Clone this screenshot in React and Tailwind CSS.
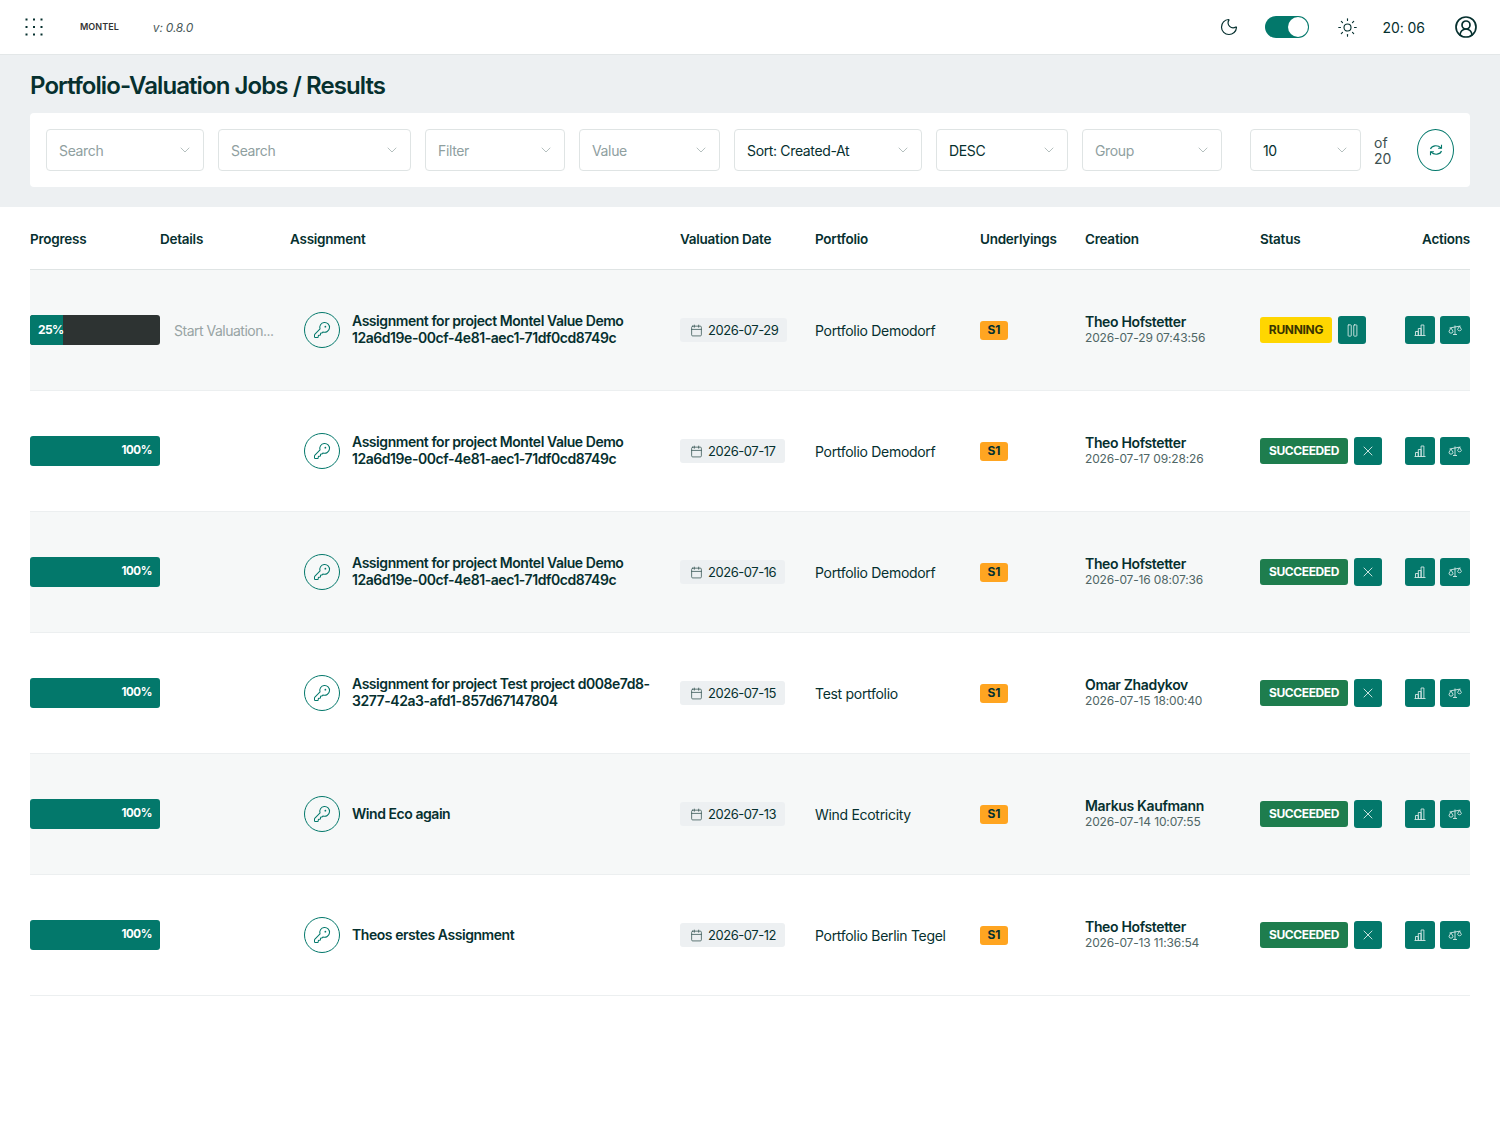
import React from 'react';
import { Moon, Sun, CircleUserRound, ChevronDown, KeyRound, Calendar, Pause, X } from 'lucide-react';

const rows = [
  { pct: 25, details: 'Start Valuation...', title: ['Assignment for project Montel Value Demo', '12a6d19e-00cf-4e81-aec1-71df0cd8749c'], date: '2026-07-29', portfolio: 'Portfolio Demodorf', user: 'Theo Hofstetter', created: '2026-07-29 07:43:56', status: 'RUNNING' },
  { pct: 100, title: ['Assignment for project Montel Value Demo', '12a6d19e-00cf-4e81-aec1-71df0cd8749c'], date: '2026-07-17', portfolio: 'Portfolio Demodorf', user: 'Theo Hofstetter', created: '2026-07-17 09:28:26', status: 'SUCCEEDED' },
  { pct: 100, title: ['Assignment for project Montel Value Demo', '12a6d19e-00cf-4e81-aec1-71df0cd8749c'], date: '2026-07-16', portfolio: 'Portfolio Demodorf', user: 'Theo Hofstetter', created: '2026-07-16 08:07:36', status: 'SUCCEEDED' },
  { pct: 100, title: ['Assignment for project Test project d008e7d8-', '3277-42a3-afd1-857d67147804'], date: '2026-07-15', portfolio: 'Test portfolio', user: 'Omar Zhadykov', created: '2026-07-15 18:00:40', status: 'SUCCEEDED' },
  { pct: 100, title: ['Wind Eco again'], date: '2026-07-13', portfolio: 'Wind Ecotricity', user: 'Markus Kaufmann', created: '2026-07-14 10:07:55', status: 'SUCCEEDED' },
  { pct: 100, title: ['Theos erstes Assignment'], date: '2026-07-12', portfolio: 'Portfolio Berlin Tegel', user: 'Theo Hofstetter', created: '2026-07-13 11:36:54', status: 'SUCCEEDED' },
];

const filters = [
  { label: 'Search', w: 'w-[158px]' },
  { label: 'Search', w: 'w-[193px]' },
  { label: 'Filter', w: 'w-[140px]' },
  { label: 'Value', w: 'w-[141px]' },
  { label: 'Sort: Created-At', w: 'w-[188px]', on: true },
  { label: 'DESC', w: 'w-[132px]', on: true },
  { label: 'Group', w: 'w-[140px]' },
];

const cols = 'grid grid-cols-[130px_130px_390px_135px_165px_105px_175px_145px_65px]';

const Dots = () => (
  <svg width="18" height="18" viewBox="0 0 18 18" fill="#06302f">
    {[1.5, 9, 16.5].map((y) => [1.5, 9, 16.5].map((x) => <rect key={`${x}-${y}`} x={x - 1} y={y - 1} width="2" height="2" />))}
  </svg>
);

const Bars = () => (
  <svg width="14" height="14" viewBox="0 0 14 14" fill="none" stroke="#d6e9e6" strokeWidth="0.9">
    <path d="M1.5 12.5h11M2.5 12.5V8.5h2.8V12.5M5.3 12.5V5.5h2.8v7M8.1 12.5V2h2.8v10.5" />
  </svg>
);

// tilted balance, lucide's Scale is level
const Balance = () => (
  <svg width="14" height="14" viewBox="0 0 14 14" fill="none" stroke="#d6e9e6" strokeWidth="0.9">
    <path d="M7 2.5v9M5 11.5h4M1.5 5l11-2" />
    <path d="M3 5L1 8.2a2 2 0 0 0 4 0Z" />
    <path d="M11.5 3.2L9.6 6.4a2 2 0 0 0 3.8 0Z" />
  </svg>
);

const Refresh = () => (
  <svg width="16" height="16" viewBox="0 0 16 16" fill="none" stroke="#03786b" strokeWidth="1.1">
    <path d="M2.5 7C3.5 3.6 9.5 2.4 13 6" />
    <path d="M13.5 2.8v3.4h-3.4" />
    <path d="M13.5 9C12.5 12.4 6.5 13.6 3 10" />
    <path d="M2.5 13.2V9.8h3.4" />
  </svg>
);

const Select = ({ label, w, on }) => (
  <div className={`${w} h-[42px] shrink-0 flex items-center justify-between pl-3 pr-[10px] bg-white border border-[#dfe4e4] rounded-[4px]`}>
    <span className={`text-[14px] tracking-[-0.35px] ${on ? 'text-[#06302f]' : 'text-[#8fa09f]'}`}>{label}</span>
    <ChevronDown size={16} strokeWidth={1.1} className="text-[#9aa8a7]" />
  </div>
);

const IconButton = ({ w, children }) => (
  <button className={`${w} h-[28px] flex items-center justify-center bg-[#03786b] rounded-[3px] text-[#d6e9e6]`}>
    {children}
  </button>
);

const Row = ({ row, shaded }) => (
  <div className={`${cols} h-[121px] items-center border-b border-[#eceff0] ${shaded ? 'bg-[#f6f8f8]' : 'bg-white'}`}>
    <div className="h-[30px] rounded-[3px] bg-[#2d3332] overflow-hidden">
      <div
        className={`h-full bg-[#03786b] flex items-center font-bold text-white ${row.pct < 100 ? 'pl-2 text-[12px] tracking-[-0.6px]' : 'justify-end pr-2 text-[11.5px] tracking-[-0.4px]'}`}
        style={{ width: `${row.pct}%` }}
      >
        {row.pct}%
      </div>
    </div>
    <div className="pl-[14px] pr-4 text-[14px] text-[#98a4a4] tracking-[-0.5px] whitespace-nowrap overflow-hidden">{row.details}</div>
    <div className="flex items-center gap-3 pl-[14px]">
      <div className="w-[36px] h-[36px] shrink-0 rounded-full border border-[#03786b] flex items-center justify-center">
        <KeyRound size={18} strokeWidth={1.35} className="text-[#03786b]" />
      </div>
      <div className="pb-[2px] text-[14px] leading-[17px] font-semibold text-[#06302f] tracking-[-0.45px] whitespace-nowrap">
        {row.title.map((line) => <div key={line}>{line}</div>)}
      </div>
    </div>
    <div className="flex">
      <div className="flex items-center gap-[5px] h-[24px] pl-[10px] pr-[9px] rounded-[3px] bg-[#edf0f2] text-[13px] text-[#06302f] tracking-[-0.45px]">
        <Calendar size={13} strokeWidth={1.5} className="text-[#3f5c5b]" />
        <span className="pt-[1px]">{row.date}</span>
      </div>
    </div>
    <div className="text-[14px] text-[#06302f] tracking-[-0.3px]">{row.portfolio}</div>
    <div className="flex">
      <span className="flex items-center justify-center w-[28px] h-[19px] rounded-[3px] bg-[#ffa521] text-[12px] font-bold text-[#06302f]">S1</span>
    </div>
    <div>
      <div className="text-[14px] leading-[15px] font-semibold text-[#06302f] tracking-[-0.35px]">{row.user}</div>
      <div className="mt-[1px] text-[12px] leading-[16px] text-[#4f6665] tracking-[-0.15px]">{row.created}</div>
    </div>
    <div className="flex items-center gap-[6px]">
      {row.status === 'RUNNING' ? (
        <>
          <span className="w-[72px] h-[26px] flex items-center justify-center rounded-[3px] bg-[#ffd600] text-[12px] font-bold text-[#3a3500] tracking-[-0.3px]">RUNNING</span>
          <IconButton w="w-[28px]"><Pause size={15} strokeWidth={1.4} /></IconButton>
        </>
      ) : (
        <>
          <span className="w-[88px] h-[26px] flex items-center justify-center rounded-[3px] bg-[#1e7d4e] text-[12px] font-bold text-white tracking-[-0.4px]">SUCCEEDED</span>
          <IconButton w="w-[28px]"><X size={16} strokeWidth={1.4} /></IconButton>
        </>
      )}
    </div>
    <div className="flex justify-end gap-[5px]">
      <IconButton w="w-[30px]"><Bars /></IconButton>
      <IconButton w="w-[30px]"><Balance /></IconButton>
    </div>
  </div>
);

export default function App() {
  return (
    <div className="min-h-[1125px] bg-white text-[#06302f] font-['Inter',sans-serif]">
      <header className="h-[55px] border-b border-[#e3e7e8] flex items-center pl-[25px] pr-[22px]">
        <Dots />
        <span className="ml-[37px] text-[9px] font-semibold tracking-[0.05px] text-[#333]">MONTEL</span>
        <span className="ml-[34px] mt-[2px] text-[12px] italic text-[#4a5a5a] tracking-[-0.2px]">v: 0.8.0</span>
        <div className="ml-auto flex items-center">
          <Moon size={20} strokeWidth={1.4} />
          <div className="ml-[26px] w-[44px] h-[22px] rounded-full bg-[#03786b] flex items-center justify-end pr-[1px]">
            <div className="w-[20px] h-[20px] rounded-full bg-white" />
          </div>
          <Sun size={21} strokeWidth={1.3} className="ml-[28px]" />
          <span className="ml-[24px] mt-[1px] text-[14px] tracking-[-0.05px]">20: 06</span>
          <CircleUserRound size={24} strokeWidth={1.7} className="ml-[29px]" />
        </div>
      </header>

      <section className="h-[152px] bg-[#edf0f2] px-[30px] pt-[17px]">
        <h1 className="text-[24px] leading-[27px] font-semibold tracking-[-0.92px] text-[#06302f]">Portfolio-Valuation Jobs / Results</h1>
        <div className="mt-[14px] h-[74px] bg-white rounded-[4px] flex items-center pl-4 gap-[14px]">
          {filters.map((f, i) => <Select key={i} {...f} />)}
          <div className="ml-[14px]">
            <Select label="10" w="w-[111px]" on />
          </div>
          <div className="-ml-[1px] pt-[2px] text-[14px] leading-[16px] text-[#3c5050]">of<br />20</div>
          <button className="ml-[12px] w-[37px] h-[42px] rounded-[50%] border border-[#03786b] flex items-center justify-center">
            <Refresh />
          </button>
        </div>
      </section>

      <main className="px-[30px]">
        <div className={`${cols} h-[63px] pt-[2px] items-center border-b border-[#dfe4e4] text-[13.5px] font-semibold tracking-[-0.25px] text-[#06302f]`}>
          <div>Progress</div>
          <div>Details</div>
          <div>Assignment</div>
          <div>Valuation Date</div>
          <div>Portfolio</div>
          <div>Underlyings</div>
          <div>Creation</div>
          <div>Status</div>
          <div className="text-right">Actions</div>
        </div>
        {rows.map((row, i) => <Row key={row.date} row={row} shaded={i % 2 === 0} />)}
      </main>
    </div>
  );
}
